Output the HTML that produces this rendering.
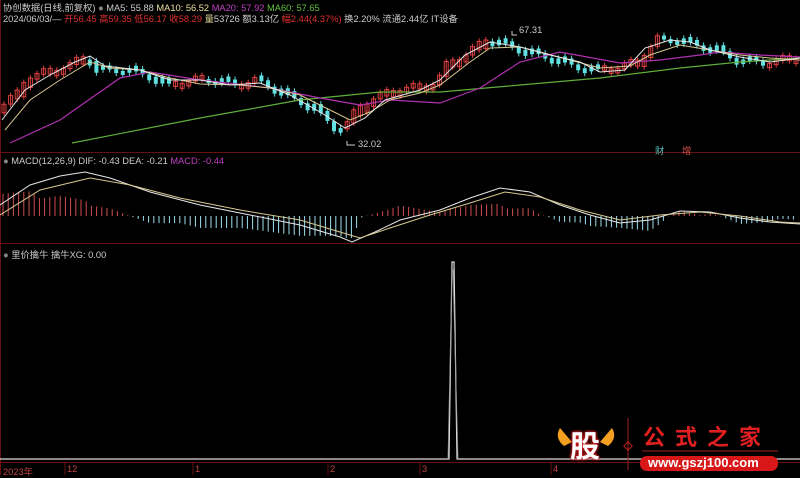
<!DOCTYPE html><html><head><meta charset="utf-8"><style>
body{margin:0;background:#000;width:800px;height:475px;overflow:hidden;font-family:"Liberation Sans","Noto Sans CJK SC",sans-serif}
svg{position:absolute;left:0;top:0}
.t{position:absolute;font-size:9.3px;white-space:nowrap;color:#ccc}
</style></head><body>
<svg id="s" width="800" height="475" xmlns="http://www.w3.org/2000/svg">
<rect width="800" height="475" fill="#000"/>
<g stroke="#6a1010" stroke-width="1" fill="none">
<line x1="0" y1="152.5" x2="800" y2="152.5"/><line x1="0" y1="243.5" x2="800" y2="243.5"/><line x1="0" y1="462.5" x2="800" y2="462.5"/>
<line x1="0.5" y1="0" x2="0.5" y2="475"/>
</g>
<g id="g"></g>
<polyline points="72,143 200,118 300,100 380,92 440,92 520,85 600,78 680,68 740,62 800,58" stroke="#5fae3a" fill="none" stroke-width="1.2"/>
<polyline points="10,143 60,120 120,78 150,72 200,80 270,88 320,98 360,105 390,100 440,103 480,88 520,62 560,52 620,63 660,60 700,55 720,52 760,55 800,57" stroke="#b030b0" fill="none" stroke-width="1.2"/>
<polyline points="5,130 30,100 60,80 90,62 110,68 140,70 170,78 200,84 240,85 270,88 300,95 330,110 350,120 370,112 390,100 420,93 440,85 470,62 490,48 520,47 540,52 570,60 600,68 630,66 650,55 680,45 710,50 740,55 770,58 800,60" stroke="#d8c890" fill="none" stroke-width="1"/>
<polyline points="2,120 25,90 50,75 75,62 90,56 105,66 140,70 170,80 200,80 230,85 260,83 290,95 320,112 345,128 365,118 385,100 420,90 440,80 465,55 490,42 520,47 550,55 580,62 600,72 625,70 645,48 670,40 690,42 710,50 740,57 770,62 800,58" stroke="#e8e8e8" fill="none" stroke-width="1"/>
<polyline points="0,205 30,185 60,176 85,172 110,178 150,192 200,205 250,215 300,225 340,237 352,242 375,232 400,220 440,210 470,198 500,188 530,192 560,205 590,215 620,223 650,220 680,211 710,212 740,218 770,222 800,224" stroke="#e8e8e8" fill="none"/>
<polyline points="0,215 40,190 90,178 130,185 180,198 240,210 300,220 340,232 360,238 390,228 430,215 470,203 505,192 540,197 580,210 620,220 660,215 700,212 740,216 780,222 800,223" stroke="#d8c890" fill="none"/>
<polyline points="0,459 449,459 452,262 454,262 457,459 800,459" stroke="#ddd" fill="none" stroke-width="1.2"/>
<polyline points="448,459 452,270 453,270 458,459" stroke="#999" fill="none" stroke-width="0.8"/>
<path d="M512,31 v4 h5" stroke="#ccc" fill="none"/>
<path d="M347,141 v4 h8" stroke="#ccc" fill="none"/>
<g stroke="#6a1010"><line x1="65" y1="463" x2="65" y2="475"/><line x1="193" y1="463" x2="193" y2="475"/><line x1="328" y1="463" x2="328" y2="475"/><line x1="420" y1="463" x2="420" y2="475"/><line x1="551" y1="463" x2="551" y2="475"/></g>
<path d="M560,428 q-6,10 4,18 l8,-4 z M612,428 q6,10 -4,18 l-8,-4z" fill="#f3a020"/>
<line x1="628" y1="418" x2="628" y2="470" stroke="#a02020"/>
<rect x="625" y="443" width="6" height="6" transform="rotate(45 628 446)" fill="none" stroke="#c02020"/>
<line x1="642" y1="451" x2="778" y2="451" stroke="#a02020"/>
<rect x="640" y="456" width="138" height="15" rx="7" fill="#d81818"/>
</svg>
<div class="t" style="left:3px;top:0px">协创数据(日线,前复权) <span style="color:#888">●</span> MA5: 55.88 <span style="color:#e8e0a0">MA10: 56.52</span> <span style="color:#c040c0">MA20: 57.92</span> <span style="color:#60c040">MA60: 57.65</span></div>
<div class="t" style="left:3px;top:11px">2024/06/03/— <span style="color:#e03030">开56.45 高59.35 低56.17 收58.29</span> <span style="color:#e8e0a0">量</span>53726 额3.13亿 <span style="color:#e03030">幅2.44(4.37%)</span> 换2.20% 流通2.44亿 IT设备</div>
<div class="t" style="left:519px;top:25px">67.31</div>
<div class="t" style="left:358px;top:139px">32.02</div>
<div class="t" style="left:655px;top:143px;color:#5bb">财</div>
<div class="t" style="left:682px;top:143px;color:#e05050">增</div>
<div class="t" style="left:3px;top:156px"><span style="color:#888">●</span> MACD(12,26,9) DIF: -0.43 DEA: -0.21 <span style="color:#c040c0">MACD: -0.44</span></div>
<div class="t" style="left:3px;top:247px"><span style="color:#888">●</span> 里价擒牛 擒牛XG: 0.00</div>
<div class="t" style="left:3px;top:464px;color:#c04040">2023年</div>
<div class="t" style="left:67px;top:464px;color:#c04040">12</div>
<div class="t" style="left:195px;top:464px;color:#c04040">1</div>
<div class="t" style="left:330px;top:464px;color:#c04040">2</div>
<div class="t" style="left:422px;top:464px;color:#c04040">3</div>
<div class="t" style="left:553px;top:464px;color:#c04040">4</div>
<div class="t" style="left:570px;top:422px;font-size:30px;font-weight:bold;color:#fff;text-shadow:0 0 3px #e02020,0 0 3px #e02020">股</div>
<div class="t" style="left:643px;top:420px;font-size:22px;font-weight:bold;color:#e02020;letter-spacing:10px">公式之家</div>
<div class="t" style="left:648px;top:455px;font-size:13px;font-weight:bold;color:#fff">www.gszj100.com</div>
<script>
(function(){
var P=[[0,110],[20,95],[30,78],[60,70],[75,65],[90,57],[100,70],[130,70],[150,75],[170,85],[200,80],[220,80],[240,85],[260,80],[280,90],[300,100],[320,110],[340,130],[350,125],[360,110],[375,100],[400,90],[420,88],[440,83],[450,65],[470,55],[490,40],[510,45],[530,52],[560,60],[580,67],[600,70],[620,68],[640,63],[660,40],[680,40],[700,45],[720,50],[740,60],[770,63],[800,58]];
function f(x,A){if(x<=A[0][0])return A[0][1];for(var i=1;i<A.length;i++)if(x<=A[i][0]){var a=A[i-1],b=A[i];return a[1]+(b[1]-a[1])*(x-a[0])/(b[0]-a[0]);}return A[A.length-1][1];}
var g=document.getElementById('g'),h='';
for(var x=4;x<798;x+=6.6){var y1=f(x-3,P),y2=f(x+3,P),j=Math.sin(x*1.7)*3,up=y2<y1;var tp=Math.min(y1,y2)+j-2,bt=Math.max(y1,y2)+j+2;var c=up?'#e04040':'#60e0e0';
h+='<line x1="'+x+'" y1="'+(tp-3)+'" x2="'+x+'" y2="'+(bt+3)+'" stroke="'+c+'"/>';
h+='<rect x="'+(x-2)+'" y="'+tp+'" width="4" height="'+(bt-tp)+'" '+(up?'fill="none" stroke="'+c+'"':'fill="'+c+'"')+'/>';}
var M=[[0,205],[30,185],[60,176],[85,172],[110,178],[150,192],[200,205],[250,215],[300,225],[340,237],[352,242],[375,232],[400,220],[440,210],[470,198],[500,188],[530,192],[560,205],[590,215],[620,223],[650,220],[680,211],[710,212],[740,218],[770,222],[800,224]];
var D=[[0,215],[40,190],[90,178],[130,185],[180,198],[240,210],[300,220],[340,232],[360,238],[390,228],[430,215],[470,203],[505,192],[540,197],[580,210],[620,220],[660,215],[700,212],[740,216],[780,222],[800,223]];
for(var x=3;x<798;x+=5.2){var v=(f(x,D)-f(x,M))*2.2;if(v<0)v=Math.max(v*1.8,-22);var c=v>0?'#d05050':'#a0e0f0';h+='<line x1="'+x+'" y1="216" x2="'+x+'" y2="'+(216-v)+'" stroke="'+c+'" stroke-width="1"/>';}
g.innerHTML=h;
})();
</script>
</body></html>
